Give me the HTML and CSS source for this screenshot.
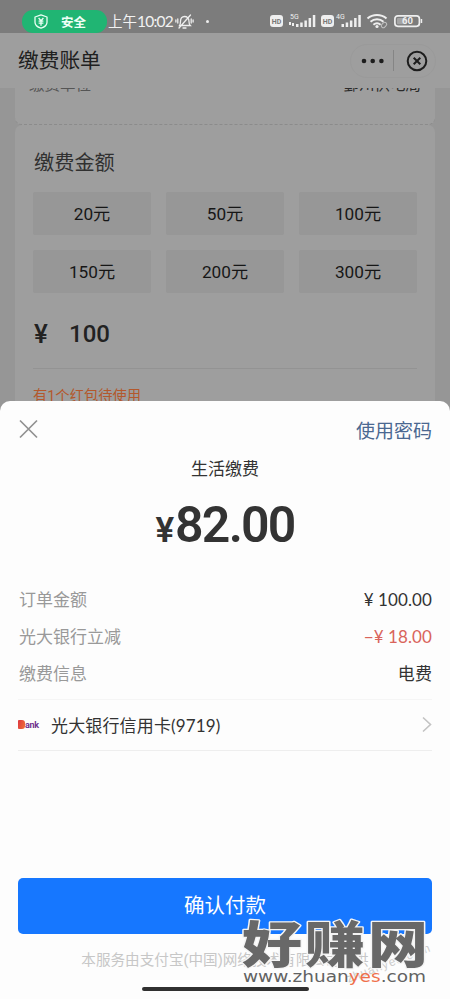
FILE: index.html
```html
<!DOCTYPE html>
<html lang="zh-CN">
<head>
<meta charset="utf-8">
<meta name="viewport" content="width=device-width, initial-scale=1">
<title>缴费账单</title>
<link rel="stylesheet" href="styles.css">
</head>
<body>
<div class="phone">
  <div class="status">
    <div class="safe">
      <svg width="14" height="15" viewBox="0 0 14 15" fill="none" stroke="#eafff4" stroke-width="1.3" stroke-linejoin="round"><path d="M7 .9 13 3v5.2c0 3-2.700 4.900-6 6-3.300-1.100-6-3-6-6V3z"/><path d="M4.600 4 7 6.700 9.400 4M4.600 7.100h4.800M4.600 9.200h4.800M7 6.700v5"/></svg>
      <span>安全</span>
    </div>
    <span class="time">上午<b>10:02</b></span>
    <svg class="mute" width="19" height="16" viewBox="0 0 19 16" fill="none" stroke="#eee" stroke-width="1.300" stroke-linecap="round"><path d="M4.500 11.500h10.800c-1-1-1.300-2-1.300-4C14 4.200 12 2.500 9.500 2.500S5.500 4.200 5.500 7.500c0 2-.3 3-1 4zM8 14h3M15.500 1 4 14M2.800 5v4M.9 6v2M16.200 5v4M18.100 6v2"/></svg>
    <i class="dot"></i>
    <svg class="signals" width="154" height="18" viewBox="0 0 154 18" fill="#efefef">
      <rect x="0" y="3" width="13" height="12" rx="3"/><text x="1.800" y="11.700" class="hd">HD</text>
      <text x="20" y="7" class="net">5G</text>
      <path d="M19 10h2v3h-2zM22 11h2v3h-2zM26 12h2.500v3H26zM30.200 10.500h2.500V15h-2.500zM34.400 8.500h2.500V15h-2.500zM38.600 6h2.500v9h-2.500zM42.800 3h2.500v12h-2.500z"/>
      <rect x="51" y="3" width="13" height="12" rx="3"/><text x="52.800" y="11.700" class="hd">HD</text>
      <text x="66" y="7" class="net">4G</text>
      <path d="M71.500 12H74v3h-2.500zM75.700 10.500h2.500V15h-2.500zM79.900 8.500h2.500V15h-2.500zM84.100 6h2.500v9h-2.500zM88.300 3h2.500v12h-2.500z"/>
      <g fill="none" stroke="#efefef" stroke-width="2"><path d="M97.500 6.500c5.400-4.700 13.600-4.700 19 0M100.500 9.700c3.700-3.200 9.300-3.200 13 0M103.400 12.700c2.200-1.800 5-1.800 7.200 0"/></g>
      <circle cx="107" cy="14.500" r="1.600"/>
      <g fill="none" stroke="#c4c4c4" stroke-width="1"><rect x="111" y="11" width="6" height="4" rx="2" transform="rotate(-45 114 13)"/></g>
      <rect x="124.900" y="3.800" width="24.500" height="10.500" rx="3" fill="none" stroke="#efefef" stroke-width="1.700"/>
      <rect x="127" y="6" width="10" height="6.200" rx="1" fill="#a4a4a4"/><path d="M150.700 7h1.500v4h-1.500z"/>
      <text x="132" y="12.300" class="charge">60</text>
    </svg>
  </div>

  <header class="nav">
    <h1>缴费账单</h1>
    <div class="capsule">
      <svg width="24" height="6" viewBox="0 0 24 6" fill="#1d1d1d"><circle cx="3" cy="3" r="2.300"/><circle cx="11.700" cy="3" r="2.300"/><circle cx="20.400" cy="3" r="2.300"/></svg>
      <i></i>
      <svg width="22" height="22" viewBox="0 0 22 22" fill="none" stroke="#1d1d1d" stroke-width="2"><circle cx="11" cy="11" r="9.300"/><path d="m7.700 7.700 6.600 6.600M14.300 7.700l-6.600 6.600"/></svg>
    </div>
  </header>

  <main class="page">
    <section class="card unit"><div class="clip"><span>缴费单位</span><span class="company">鄞州供电局</span></div></section>
    <section class="card amount">
      <h2>缴费金额</h2>
      <div class="options">
        <span>20元</span><span>50元</span><span>100元</span>
        <span>150元</span><span>200元</span><span>300元</span>
      </div>
      <div class="entry"><span>¥</span><b>100</b></div>
      <p class="coupon">有1个红包待使用</p>
    </section>
  </main>

  <section class="sheet">
    <div class="sheet-top">
      <svg width="20" height="20" viewBox="0 0 20 20" fill="none" stroke="#919191" stroke-width="1.700"><path d="m2 1.500 17 17M19 1.500l-17 17"/></svg>
      <span>使用密码</span>
    </div>
    <p class="title">生活缴费</p>
    <p class="total"><small>¥</small><span>82.00</span></p>
    <dl class="details">
      <div><dt>订单金额</dt><dd>¥ 100.00</dd></div>
      <div class="off"><dt>光大银行立减</dt><dd>−¥ 18.00</dd></div>
      <div><dt>缴费信息</dt><dd>电费</dd></div>
    </dl>
    <div class="bank">
      <span class="logo"><i></i>ank</span>
      <span class="name">光大银行信用卡(9719)</span>
      <svg width="10" height="17" viewBox="0 0 10 17" fill="none" stroke="#c3c3c3" stroke-width="1.600"><path d="m1 1.500 7.500 7L1 15.500"/></svg>
    </div>
    <div class="pay">确认付款</div>
    <p class="note">本服务由支付宝(中国)网络技术有限公司提供</p>
    <i class="home"></i>
  </section>

  <div class="stamp">zhuanyes.com</div>
  <svg class="brand" width="194" height="70" viewBox="0 0 194 70">
    <text class="brand-cn" transform="translate(0 43.500) scale(1 .84)" x="4" y="0" textLength="186">好赚网</text>
    <text class="brand-url" x="5" y="62.500" textLength="183" lengthAdjust="spacingAndGlyphs">www.zhuan<tspan>yes</tspan>.com</text>
  </svg>
</div>
</body>
</html>
```
FILE: styles.css
```css
* { box-sizing: border-box; margin: 0; padding: 0; }
body { background: #969696; font-family: Roboto, "Noto Sans CJK SC", sans-serif; color: #333; }
svg { display: block; flex: none; }
.phone { position: relative; width: 450px; height: 999px; overflow: hidden; display: flex; flex-direction: column; }

.status { height: 33px; flex: none; background: #7c7c7c; display: flex; align-items: flex-start; padding: 10px 0 0 22px; color: #f2f2f2; }
.safe { width: 85px; height: 23px; border-radius: 11px; background: #20b573; display: flex; align-items: center; padding-left: 12px; gap: 13px; font-size: 12.5px; font-weight: 700; color: #effff7; }
.time { font: 14.5px/23px Lato, "Noto Sans CJK SC", sans-serif; width: 67px; margin-left: 1px; white-space: nowrap; }
.time b { font-weight: 400; font-size: 15.5px; letter-spacing: -.8px; }
.mute { margin-top: 4px; }
.dot { width: 3px; height: 3px; border-radius: 50%; background: #eee; margin: 10px 0 0 12px; }
.signals { margin: 2px 0 0 61px; }
.hd { font: 700 7px Roboto, sans-serif; fill: #777; }
.net { font: 7px Roboto, sans-serif; }
.charge { font: 700 9.5px Roboto, sans-serif; }

.nav { height: 55px; flex: none; background: #9e9e9e; display: flex; align-items: center; justify-content: space-between; padding: 0 14px 0 18px; }
.nav h1 { font-size: 20.7px; font-weight: 400; color: #202020; line-height: 30px; }
.capsule { width: 86px; height: 34px; border-radius: 17px; border: 1px solid #9a9a9a; display: flex; align-items: center; padding-left: 10px; }
.capsule i { width: 1px; height: 21px; background: #858585; margin: 0 12px 0 8px; }

.page { flex: 1; padding: 0 15px; }
.card { background: #9e9e9e; }
.unit { height: 37px; border-bottom: 1px dashed #8b8b8b; border-radius: 0 0 7px 7px; padding: 0 14px; }
.clip { height: 8px; overflow: hidden; display: flex; justify-content: space-between; align-items: flex-end; font-size: 15.5px; line-height: 22px; color: #555; }
.company { color: #2b2b2b; }
.amount { height: 320px; border-radius: 7px 7px 0 0; padding: 23px 18px 0; }
.amount h2 { font-size: 20.200px; font-weight: 400; line-height: 30px; color: #303030; padding-left: 1px; }
.options { display: grid; grid-template-columns: repeat(3, 118px); grid-auto-rows: 43px; gap: 15px; margin-top: 14px; }
.options span { background: #979797; border-radius: 2px; display: flex; align-items: center; justify-content: center; font-size: 17.200px; color: #161616; padding-bottom: 3px; }
.entry { display: flex; align-items: center; height: 76px; border-bottom: 1px solid #939393; color: #222; font-size: 26px; font-weight: 500; padding: 6px 0 0 1px; }
.entry span { width: 35px; }
.entry b { font-weight: 500; font-size: 24px; }
.coupon { font-size: 14.300px; line-height: 20px; margin-top: 17px; color: #b3582c; }

.sheet { position: absolute; left: 0; right: 0; top: 401px; bottom: 0; background: #fdfdfd; border-radius: 10px 10px 0 0; padding: 0 18px; display: flex; flex-direction: column; }
.sheet-top { height: 56px; flex: none; display: flex; align-items: center; justify-content: space-between; font-size: 19px; color: #4b6891; }
.title { font-size: 17px; line-height: 24px; text-align: center; }
.total { display: flex; justify-content: center; align-items: baseline; height: 60px; line-height: 60px; margin-top: 14px; font-size: 50px; font-weight: 600; white-space: nowrap; }
.total small { font-size: 35px; margin-right: 1px; }
.total span { letter-spacing: -1.800px; }
.details { height: 111px; flex: none; margin-top: 27px; }
.details div { display: flex; justify-content: space-between; height: 37px; font: 17px/36px Lato, "Noto Sans CJK SC", sans-serif; }
.details dt { color: #999; padding-left: 1px; }
.details dd { letter-spacing: .1px; }
.details .off dd { color: #d9645b; }
.bank { height: 52px; flex: none; margin-top: 6px; border-top: 1px solid #f5f5f5; border-bottom: 1px solid #eee; display: flex; align-items: center; padding-bottom: 1px; font: 17px Lato, "Noto Sans CJK SC", sans-serif; }
.logo { width: 33px; display: flex; align-items: center; font: 700 9px/12px Roboto, sans-serif; color: #70328f; letter-spacing: -.3px; }
.logo i { width: 7px; height: 9px; border-radius: 1px 3px 3px 1px; background: linear-gradient(110deg, #dd3640, #ef7336); }
.name { flex: 1; letter-spacing: .15px; }
.pay { height: 56px; flex: none; margin-top: 127px; border-radius: 5px; background: #1677ff; color: #fff; font-size: 20.500px; line-height: 57px; text-align: center; }
.note { font-size: 14.600px; line-height: 22px; color: #c7c7c7; text-align: center; margin-top: 15px; white-space: nowrap; }
.home { width: 167px; height: 4px; flex: none; border-radius: 2px; background: #303030; margin: 16px auto 0; }

.brand { position: absolute; left: 238px; top: 919px; overflow: visible; }
.brand-cn { font: 900 60px "Noto Sans CJK SC", sans-serif; fill: #686868; stroke: #f4f4f4; stroke-width: 3px; paint-order: stroke; stroke-linejoin: round; }
.brand-url { font: 16px "DejaVu Sans", sans-serif; fill: #626262; }
.brand-url tspan { fill: #ef704b; }
.stamp { position: absolute; left: 344px; top: 956px; font: 12px "Liberation Sans", sans-serif; color: #ccc; letter-spacing: 1px; transform: rotate(-21deg); }
```
